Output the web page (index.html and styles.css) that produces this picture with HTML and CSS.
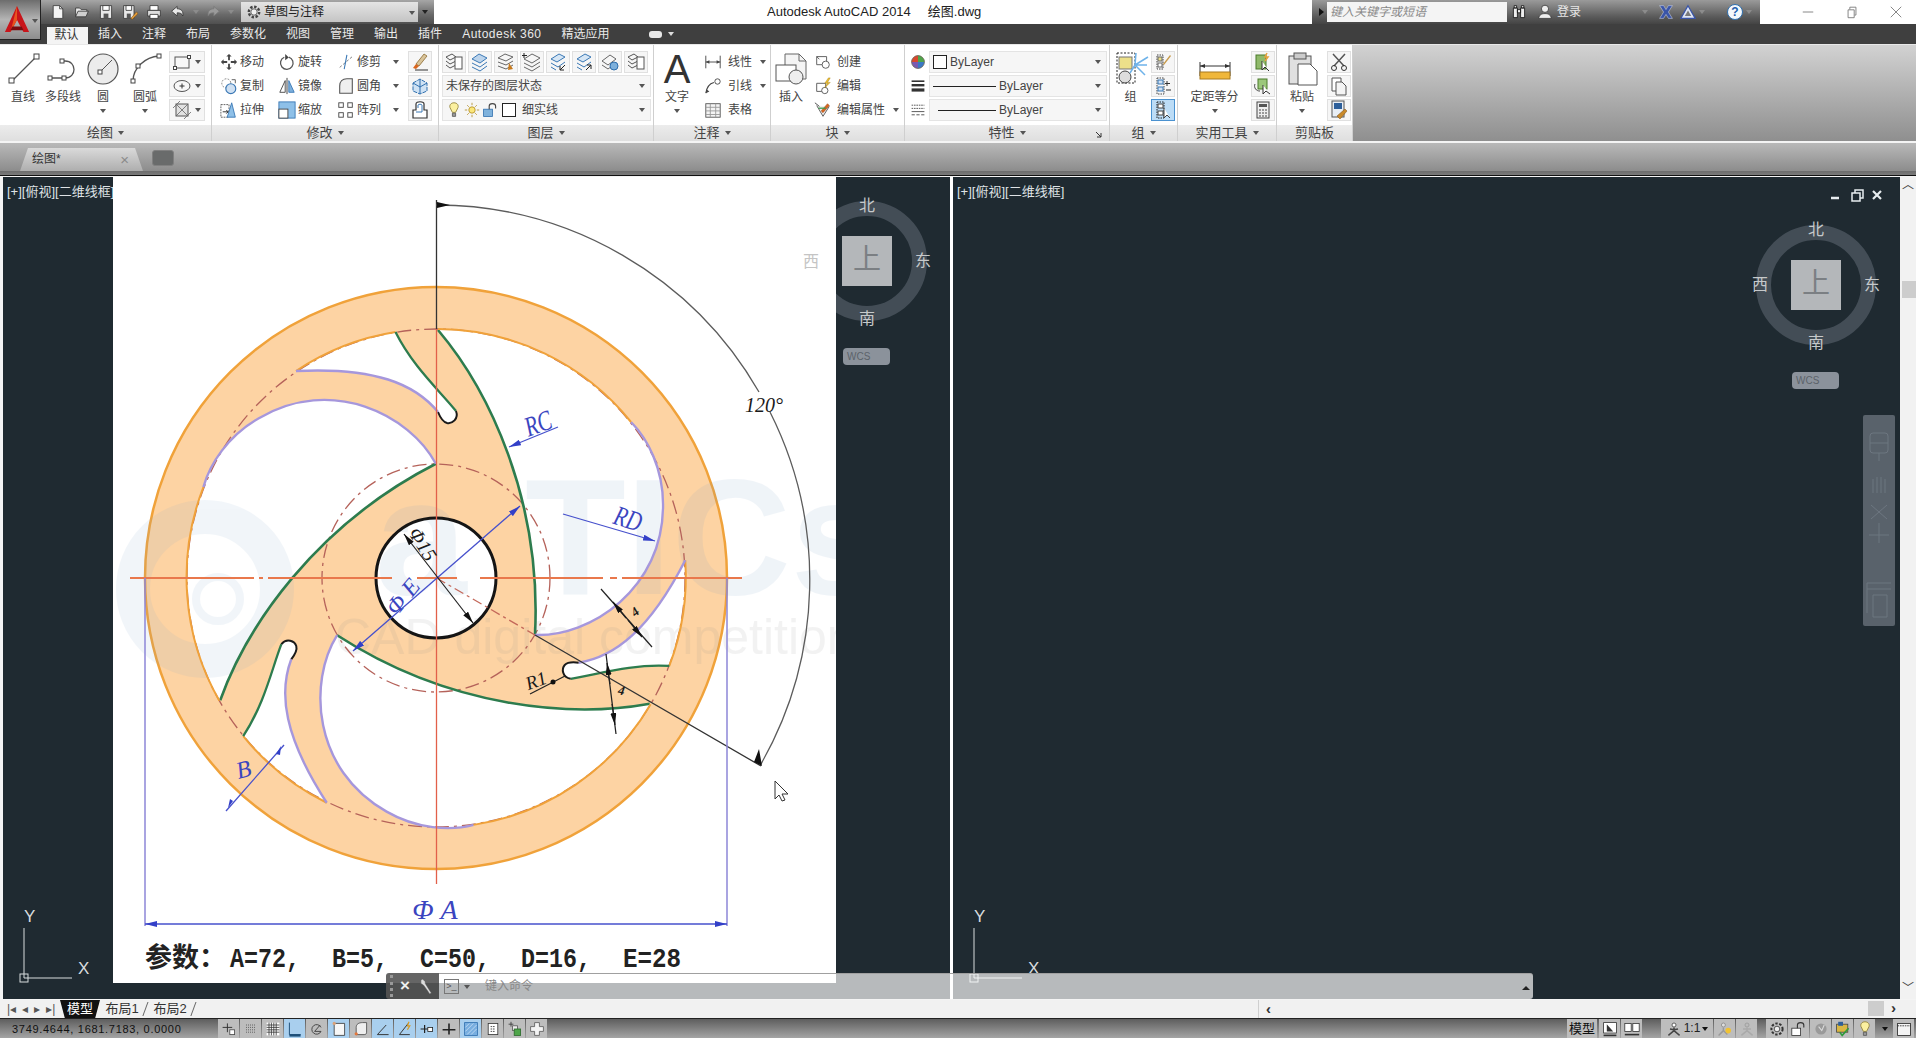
FILE: index.html
```html
<!DOCTYPE html>
<html lang="zh">
<head>
<meta charset="utf-8">
<title>Autodesk AutoCAD 2014</title>
<link rel="stylesheet" href="styles.css">
</head>
<body>
<svg class="defs" aria-hidden="true">
  <defs>
    <symbol id="q-new" viewBox="0 0 20 20"><path d="M4 2h8l4 4v12H4z" fill="#f4f4f4" stroke="#333"/><path d="M12 2v4h4" fill="none" stroke="#333"/></symbol>
    <symbol id="q-open" viewBox="0 0 20 20"><path d="M2 16V5h5l2 2h7v2" fill="#e8e8e8" stroke="#333"/><path d="M2 16l3-7h13l-3 7z" fill="#cfcfcf" stroke="#333"/></symbol>
    <symbol id="q-save" viewBox="0 0 20 20"><path d="M3 2h14v16H3z" fill="#e8e8e8" stroke="#333"/><path d="M6 2h8v6H6z" fill="#fff" stroke="#333"/><path d="M7 12h6v6H7z" fill="#555"/></symbol>
    <symbol id="q-saveas" viewBox="0 0 20 20"><path d="M2 2h13v16H2z" fill="#e8e8e8" stroke="#333"/><path d="M5 2h7v6H5z" fill="#fff" stroke="#333"/><path d="M6 12h5v6H6z" fill="#555"/><path d="M11 18l7-8 2 2-7 7z" fill="#e8a13c" stroke="#7a4a10" stroke-width=".7"/></symbol>
    <symbol id="q-print" viewBox="0 0 20 20"><path d="M5 2h10v6H5z" fill="#fff" stroke="#333"/><path d="M2 8h16v7H2z" fill="#ddd" stroke="#333"/><path d="M5 13h10v5H5z" fill="#fff" stroke="#333"/></symbol>
    <symbol id="q-undo" viewBox="0 0 20 20"><path d="M9 3L2 9l7 6v-4c4 0 6 1 7 4 1-6-2-9-7-9z" fill="#e8e8e8" stroke="#333"/></symbol>
    <symbol id="q-redo" viewBox="0 0 20 20"><path d="M11 3l7 6-7 6v-4c-4 0-6 1-7 4-1-6 2-9 7-9z" fill="#9a9a9a" stroke="#777"/></symbol>
    <symbol id="q-gear" viewBox="0 0 20 20"><circle cx="10" cy="10" r="6.5" fill="none" stroke="#444" stroke-width="3" stroke-dasharray="3 2"/><circle cx="10" cy="10" r="4" fill="#f0f0f0" stroke="#444"/></symbol>

    <symbol id="d-line" viewBox="0 0 36 36"><path d="M7 30L31 6" stroke="#555" stroke-width="1.2"/><rect x="4" y="27" width="5" height="5" fill="#fff" stroke="#444"/><rect x="29" y="3" width="5" height="5" fill="#fff" stroke="#444"/></symbol>
    <symbol id="d-pline" viewBox="0 0 36 36"><path d="M6 27h14M20 27c12 0 12-17 0-17h-3" fill="none" stroke="#555" stroke-width="1.3"/><g fill="#fff" stroke="#444"><rect x="3" y="25" width="4" height="4"/><rect x="17" y="25" width="4" height="4"/><rect x="15" y="8" width="4" height="4"/></g></symbol>
    <symbol id="d-circle" viewBox="0 0 36 36"><circle cx="18" cy="18" r="15" fill="#ececec" stroke="#555" stroke-width="1.2"/><path d="M15 21L27 9" stroke="#555"/><rect x="13" y="19" width="4" height="4" fill="#fff" stroke="#444"/></symbol>
    <symbol id="d-arc" viewBox="0 0 36 36"><path d="M6 30c0-13 12-24 26-25" fill="none" stroke="#555" stroke-width="1.3"/><g fill="#fff" stroke="#444"><rect x="4" y="28" width="4" height="4"/><rect x="9" y="13" width="4" height="4"/><rect x="30" y="3" width="4" height="4"/></g></symbol>
    <symbol id="d-rect" viewBox="0 0 20 20"><rect x="3" y="5" width="14" height="11" fill="#f7f7f7" stroke="#555"/><g fill="#fff" stroke="#444"><rect x="1.5" y="14.5" width="3" height="3"/><rect x="15.5" y="3.5" width="3" height="3"/></g></symbol>
    <symbol id="d-ell" viewBox="0 0 20 20"><ellipse cx="10" cy="10" rx="8" ry="5.5" fill="#f7f7f7" stroke="#555"/><path d="M10 7.5v5M7.5 10h5" stroke="#333"/></symbol>
    <symbol id="d-hatch" viewBox="0 0 20 20"><rect x="4" y="4" width="12" height="12" fill="#e2e2e2" stroke="#555"/><path d="M1 8L8 1M4 16L16 4M12 19l7-7M4 4l12 12" stroke="#666" stroke-width=".8"/></symbol>

    <symbol id="m-move" viewBox="0 0 20 20"><path d="M10 1l3 3h-2v4h-2V4H7zM10 19l3-3h-2v-4h-2v4H7zM1 10l3-3v2h4v2H4v2zM19 10l-3-3v2h-4v2h4v2z" fill="#444"/></symbol>
    <symbol id="m-rot" viewBox="0 0 20 20"><path d="M12 4.5A7 7 0 1 1 7 4.7" fill="none" stroke="#555" stroke-width="1.4"/><path d="M8 1v7l4-3z" fill="#444"/></symbol>
    <symbol id="m-trim" viewBox="0 0 20 20"><path d="M3 16L17 4" stroke="#777" stroke-dasharray="3 2"/><path d="M11 2l-3 16" stroke="#3a78b5" stroke-width="1.2"/></symbol>
    <symbol id="m-copy" viewBox="0 0 20 20"><circle cx="7" cy="7" r="5" fill="none" stroke="#777" stroke-dasharray="2 1.5"/><circle cx="12" cy="13" r="5.5" fill="#cfe0f2" stroke="#3a78b5" stroke-width="1.3"/><path d="M13 3h4v4" fill="none" stroke="#555"/></symbol>
    <symbol id="m-mirror" viewBox="0 0 20 20"><path d="M10 1v18" stroke="#333"/><path d="M8 4v13H2z" fill="#fff" stroke="#444"/><path d="M12 4v13h6z" fill="#7db0dc" stroke="#3a78b5"/></symbol>
    <symbol id="m-fillet" viewBox="0 0 20 20"><path d="M3 18V10c0-5 3-8 8-8h6v16z" fill="#f0f0f0" stroke="#555" stroke-width="1.2"/></symbol>
    <symbol id="m-stretch" viewBox="0 0 20 20"><path d="M1 4h9v14H1z" fill="none" stroke="#555" stroke-dasharray="2 1"/><path d="M13 2l4 16h-9z" fill="#8ec0e8" stroke="#3a78b5"/><path d="M3 12h6M7 10l2 2-2 2" stroke="#222" fill="none"/></symbol>
    <symbol id="m-scale" viewBox="0 0 20 20"><rect x="1" y="1" width="18" height="18" fill="#8ec0e8" stroke="#3a78b5"/><rect x="1" y="9" width="10" height="10" fill="#fff" stroke="#444"/></symbol>
    <symbol id="m-array" viewBox="0 0 20 20"><g fill="#fff" stroke="#444"><rect x="2" y="2" width="5" height="5"/><rect x="12" y="2" width="5" height="5"/><rect x="2" y="13" width="5" height="5"/><rect x="12" y="13" width="5" height="5"/></g></symbol>
    <symbol id="m-erase" viewBox="0 0 20 20"><path d="M5 18h13" stroke="#333"/><path d="M14 2l3 2-8 10-3-2z" fill="#d9c49a" stroke="#8a6a30" stroke-width=".8"/><path d="M6 12l3 2-3 3-3-1z" fill="#d9661e"/></symbol>
    <symbol id="m-expl" viewBox="0 0 20 20"><path d="M3 7l7-4 7 4v8l-7 3-7-3z" fill="#cfe2f4" stroke="#2f6fae" stroke-dasharray="4 1"/><path d="M10 3v15M3 7l7 4 7-4" stroke="#2f6fae" fill="none"/></symbol>
    <symbol id="m-off" viewBox="0 0 20 20"><path d="M3 18V10h3V4c0-3 8-3 8 0v6h3v8z" fill="#fff" stroke="#333" stroke-width="1.2"/><path d="M8 8V5c0-1 4-1 4 0v7H6" fill="none" stroke="#3a78b5"/></symbol>

    <symbol id="l-a" viewBox="0 0 20 20"><path d="M2 5l6-3 4 3-6 3zM2 9l4 3 6-3M2 13l4 3 6-3" fill="none" stroke="#555"/><rect x="11" y="5" width="7" height="12" fill="#fff" stroke="#555"/></symbol>
    <symbol id="l-b" viewBox="0 0 20 20"><path d="M2 7l7-5 8 4-7 5z" fill="#bcd4ec" stroke="#3a78b5"/><path d="M2 11l8 4 7-5M2 15l8 4 7-5" fill="none" stroke="#3a78b5"/></symbol>
    <symbol id="l-c" viewBox="0 0 20 20"><path d="M2 6l7-4 8 3-7 4zM2 10l8 3 7-4M2 14l8 3 7-4" fill="none" stroke="#666"/><path d="M13 11l4 6-5 1z" fill="#c77a1d"/></symbol>
    <symbol id="l-d" viewBox="0 0 20 20"><path d="M2 7l8-5 8 4-8 5zM2 11l8 4 8-5M2 15l8 4 8-5" fill="none" stroke="#666"/><path d="M2 1v5M0 3.500h5" stroke="#222"/></symbol>
    <symbol id="l-e" viewBox="0 0 20 20"><path d="M3 7l8-5 6 3-8 5z" fill="#d6e6f5" stroke="#3a78b5"/><path d="M3 11l7 4 7-5M3 15l5 3" fill="none" stroke="#3a78b5"/><path d="M17 13l-5 5M12 14v4h4" fill="none" stroke="#222"/></symbol>
    <symbol id="l-f" viewBox="0 0 20 20"><path d="M3 7l8-5 6 3-8 5z" fill="#d6e6f5" stroke="#3a78b5"/><path d="M3 11l7 4 7-5M3 15l5 3" fill="none" stroke="#3a78b5"/><path d="M12 18l5-5M13 13h4v4" fill="none" stroke="#222"/></symbol>
    <symbol id="l-g" viewBox="0 0 20 20"><path d="M2 9l8-6 6 4-8 6zM2 13l6 4 4-3" fill="none" stroke="#666"/><circle cx="14" cy="14" r="4" fill="#7db0dc" stroke="#2f6fae"/></symbol>
    <symbol id="l-bulb" viewBox="0 0 20 20"><path d="M10 1c4 0 6 3 5 6-1 2-2 4-3 6H8C7 11 6 9 5 7 4 4 6 1 10 1z" fill="#fbf0a0" stroke="#8a7a30"/><path d="M8 14h4v4H8z" fill="#999" stroke="#555"/></symbol>
    <symbol id="l-sun" viewBox="0 0 20 20"><circle cx="10" cy="10" r="4" fill="#fbe77a" stroke="#b08a20"/><path d="M10 1v3M10 16v3M1 10h3M16 10h3M4 4l2 2M14 14l2 2M4 16l2-2M14 6l2-2" stroke="#b08a20"/></symbol>
    <symbol id="l-lock" viewBox="0 0 20 20"><rect x="2" y="9" width="11" height="9" fill="#7fb2dc" stroke="#2f6fae"/><path d="M9 9V5c0-4 8-4 8 0v3" fill="none" stroke="#444" stroke-width="1.4"/></symbol>

    <symbol id="n-dim" viewBox="0 0 20 20"><path d="M2 3v14M18 3v14M2 10h16" stroke="#444"/><path d="M2 10l4-2v4zM18 10l-4-2v4z" fill="#444"/></symbol>
    <symbol id="n-lead" viewBox="0 0 20 20"><path d="M2 18C3 11 7 7 11 6" fill="none" stroke="#444" stroke-width="1.2"/><circle cx="15" cy="5" r="3" fill="none" stroke="#444"/><path d="M2 18l1-4 3 2z" fill="#444"/></symbol>
    <symbol id="n-table" viewBox="0 0 20 20"><rect x="2" y="3" width="16" height="15" fill="#f4f4f4" stroke="#555"/><path d="M2 7h16M2 11h16M2 15h16M7 3v15M13 3v15" stroke="#999"/></symbol>
    <symbol id="b-ins" viewBox="0 0 36 36"><path d="M12 3h14l7 7v18H12z" fill="#f4f4f4" stroke="#666"/><path d="M26 3v7h7" fill="none" stroke="#666"/><rect x="3" y="14" width="20" height="16" fill="#fff" stroke="#555"/><circle cx="23" cy="26" r="7" fill="#eee" stroke="#555"/></symbol>
    <symbol id="b-make" viewBox="0 0 20 20"><path d="M3 4h11v9H3z" fill="#fff" stroke="#555"/><circle cx="13" cy="13" r="4" fill="#fff" stroke="#555"/><path d="M3 4l3 3" stroke="#555"/></symbol>
    <symbol id="b-edit" viewBox="0 0 20 20"><path d="M3 7h10v9H3z" fill="#fff" stroke="#555"/><circle cx="12" cy="15" r="3.500" fill="#fff" stroke="#555"/><path d="M16 1l-4 6h3l-3 5 6-6h-3l3-5z" fill="#f1c232" stroke="#a07a10" stroke-width=".5"/></symbol>
    <symbol id="b-attr" viewBox="0 0 20 20"><path d="M3 5l7 12 7-11" fill="#eee" stroke="#555"/><path d="M1 2l5 4" stroke="#444"/><path d="M8 11l7-8 2 2-7 8z" fill="#d9661e" stroke="#8a3a10" stroke-width=".5"/><path d="M5 8h8" stroke="#3a9a4a" stroke-width="1.4"/></symbol>
    <symbol id="p-wheel" viewBox="0 0 20 20"><circle cx="10" cy="10" r="8" fill="#e9c23a"/><path d="M10 10L2 10A8 8 0 0 1 10 2z" fill="#d9482e"/><path d="M10 10L18 10A8 8 0 0 1 10 18z" fill="#3a78c5"/><path d="M10 10L10 18A8 8 0 0 1 2 10z" fill="#7a5ab0"/><path d="M10 10L10 2A8 8 0 0 1 18 10z" fill="#4fa54a"/><circle cx="10" cy="10" r="8" fill="none" stroke="#666"/></symbol>
    <symbol id="p-weight" viewBox="0 0 20 20"><path d="M2 4h16" stroke="#333" stroke-width="2"/><path d="M2 9h16" stroke="#333" stroke-width="3"/><path d="M2 15h16" stroke="#333" stroke-width="4"/></symbol>
    <symbol id="p-type" viewBox="0 0 20 20"><path d="M2 4h16M2 8h16" stroke="#333" stroke-dasharray="2 1"/><path d="M2 12h16" stroke="#333"/><path d="M2 16h16" stroke="#333" stroke-dasharray="4 2"/></symbol>
    <symbol id="g-group" viewBox="0 0 36 36"><rect x="4" y="2" width="18" height="30" fill="none" stroke="#222" stroke-dasharray="2 1.500"/><rect x="6" y="6" width="13" height="12" fill="#ece08a" stroke="#777"/><circle cx="12" cy="26" r="6" fill="#ddd" stroke="#444"/><path d="M22 14l13-8M22 14l12 0M22 14l10 10M22 14l1-12M22 14l-5 8" stroke="#6fb3ea" stroke-width="1.500"/></symbol>
    <symbol id="g-a" viewBox="0 0 20 20"><path d="M4 3h6v14H4z" fill="none" stroke="#444" stroke-dasharray="1.500 1"/><rect x="5" y="5" width="4" height="4" fill="#ece08a" stroke="#666"/><rect x="5" y="11" width="4" height="4" fill="#fff" stroke="#666"/><path d="M10 12l7-9 1 1-7 9z" fill="#c79a4a"/></symbol>
    <symbol id="g-b" viewBox="0 0 20 20"><path d="M4 2h7v16H4z" fill="none" stroke="#444" stroke-dasharray="1.500 1"/><rect x="5" y="4" width="5" height="4" fill="#cfe0f2" stroke="#3a78b5"/><rect x="5" y="11" width="5" height="4" fill="#cfe0f2" stroke="#3a78b5"/><path d="M14 5v5M12 7.500h5M13 14h5" stroke="#333"/></symbol>
    <symbol id="g-c" viewBox="0 0 20 20"><path d="M4 2h7v16H4z" fill="none" stroke="#222" stroke-dasharray="1.500 1"/><rect x="5" y="4" width="5" height="4" fill="#fff" stroke="#444"/><rect x="5" y="11" width="5" height="4" fill="#fff" stroke="#444"/><path d="M11 8v10l3-3 3 3" fill="#fff" stroke="#444"/></symbol>
    <symbol id="u-meas" viewBox="0 0 36 36"><path d="M3 11v14M33 11v14M3 15h30" stroke="#333"/><path d="M3 15l5-2v4zM33 15l-5-2v4z" fill="#333"/><rect x="3" y="21" width="30" height="7" fill="#f0b73a" stroke="#a87a20"/></symbol>
    <symbol id="u-qs" viewBox="0 0 20 20"><rect x="3" y="3" width="10" height="14" fill="#8fb96a" stroke="#4a7a2a"/><path d="M9 9v9l3-3 4 4" fill="#fff" stroke="#333"/><path d="M14 1l-2 4h3l-3 4" stroke="#e8a13c" fill="none" stroke-width="1.500"/></symbol>
    <symbol id="u-id" viewBox="0 0 20 20"><rect x="5" y="3" width="9" height="10" fill="#9bc77a" stroke="#4a7a2a"/><path d="M2 8a5 5 0 0 0 5 7" fill="none" stroke="#444"/><path d="M10 9v9l3-3 4 3" fill="#fff" stroke="#333"/></symbol>
    <symbol id="u-calc" viewBox="0 0 20 20"><rect x="4" y="2" width="12" height="16" fill="#eee" stroke="#444"/><rect x="6" y="4" width="8" height="3" fill="#555"/><path d="M6 10h2M9 10h2M12 10h2M6 13h2M9 13h2M12 13h2M6 16h2M9 16h2M12 16h2" stroke="#444"/></symbol>
    <symbol id="c-paste" viewBox="0 0 36 36"><rect x="5" y="5" width="22" height="28" fill="#e0e0e0" stroke="#555"/><rect x="10" y="2" width="12" height="6" fill="#ccc" stroke="#555"/><path d="M14 13h12l7 7v14H14z" fill="#fff" stroke="#555"/></symbol>
    <symbol id="c-cut" viewBox="0 0 20 20"><path d="M4 2l11 12M16 2L5 14" stroke="#555" stroke-width="1.500"/><circle cx="5" cy="16" r="2.500" fill="none" stroke="#333"/><circle cx="15" cy="16" r="2.500" fill="none" stroke="#333"/></symbol>
    <symbol id="c-copy" viewBox="0 0 20 20"><path d="M3 2h9v13H3z" fill="#fff" stroke="#555"/><path d="M7 6h6l4 4v9H7z" fill="#f4f4f4" stroke="#555"/></symbol>
    <symbol id="c-match" viewBox="0 0 20 20"><rect x="3" y="1" width="12" height="16" fill="#e8eef5" stroke="#555"/><rect x="5" y="3" width="8" height="6" fill="#2d5f9a"/><path d="M8 16l8-7 2 2-7 8z" fill="#c98a2a" stroke="#7a4a10" stroke-width=".5"/></symbol>

    <symbol id="s-a" viewBox="0 0 20 20"><path d="M2 8h12M8 3v11" stroke="#333" stroke-width="1.200"/><rect x="11" y="11" width="6" height="6" fill="#fff" stroke="#444"/></symbol>
    <symbol id="s-b" viewBox="0 0 20 20"><path d="M4 5h12M4 8h12M4 11h12M4 14h12" stroke="#333" stroke-dasharray="1 1.500"/></symbol>
    <symbol id="s-c" viewBox="0 0 20 20"><rect x="2" y="2" width="16" height="16" fill="#fff"/><path d="M2 5h16M2 8h16M2 11h16M2 14h16M5 2v16M8 2v16M11 2v16M14 2v16" stroke="#333"/></symbol>
    <symbol id="s-d" viewBox="0 0 20 20"><path d="M3 2v15h14" fill="none" stroke="#1d4f78" stroke-width="1.200"/><path d="M3 18h14" stroke="#1d4f78" stroke-width="3"/></symbol>
    <symbol id="s-e" viewBox="0 0 20 20"><path d="M15 8a6 6 0 1 0 0 5H7l7-8" fill="none" stroke="#444" stroke-width="1.200"/></symbol>
    <symbol id="s-f" viewBox="0 0 20 20"><path d="M4 3h13v15H4z" fill="#f7f7f7" stroke="#333"/><circle cx="4" cy="3" r="2" fill="#d9a27a"/></symbol>
    <symbol id="s-g" viewBox="0 0 20 20"><path d="M4 8c0-4 3-6 8-6h5v12c0 2-1 3-3 3H4z" fill="#eee" stroke="#444"/><circle cx="4" cy="16" r="2" fill="#e4763a"/></symbol>
    <symbol id="s-h" viewBox="0 0 20 20"><path d="M3 17h14M3 17L14 5" stroke="#333" stroke-width="1.200" fill="none"/></symbol>
    <symbol id="s-i" viewBox="0 0 20 20"><path d="M3 17h13M3 17L14 3" stroke="#333" stroke-width="1.200" fill="none"/><path d="M15 1l-2 5h3l-3 5" stroke="#d99a1e" stroke-width="1.500" fill="none"/></symbol>
    <symbol id="s-j" viewBox="0 0 20 20"><path d="M2 10h10M7 5v10" stroke="#222" stroke-width="1.500"/><rect x="11" y="8" width="6" height="5" fill="#fff" stroke="#222"/></symbol>
    <symbol id="s-k" viewBox="0 0 20 20"><path d="M2 11h16M10 3v14" stroke="#222" stroke-width="2"/></symbol>
    <symbol id="s-l" viewBox="0 0 20 20"><rect x="2" y="2" width="16" height="16" fill="#78aee0" stroke="#2f6fae"/><path d="M3 8l5-5M3 13l10-10M5 17L17 5M10 17l7-7" stroke="#c9e0f5"/></symbol>
    <symbol id="s-m" viewBox="0 0 20 20"><rect x="4" y="3" width="12" height="14" fill="#fff" stroke="#333"/><path d="M7 7h6M7 10h6M7 13h6" stroke="#222" stroke-dasharray="2 1"/></symbol>
    <symbol id="s-n" viewBox="0 0 20 20"><path d="M2 4h6M5 1v6" stroke="#333"/><rect x="7" y="6" width="6" height="6" fill="#eee" stroke="#555"/><rect x="9" y="10" width="8" height="8" fill="#4fa54a" stroke="#2a6a2a"/></symbol>
    <symbol id="s-o" viewBox="0 0 20 20"><path d="M7 2h6v5h5v6h-5v5H7v-5H2V7h5z" fill="#f4f4f4" stroke="#555"/></symbol>
    <symbol id="s-anno" viewBox="0 0 20 20"><circle cx="10" cy="5" r="2.500" fill="#fff" stroke="#444"/><path d="M10 8v4L3 18M10 12l7 6M5 10l5 1 5-1" fill="none" stroke="#444" stroke-width="1.800"/></symbol>
    <symbol id="s-annob" viewBox="0 0 20 20"><circle cx="8" cy="5" r="2.500" fill="#ddd" stroke="#888"/><path d="M8 8v4L2 18M8 12l5 5" fill="none" stroke="#999" stroke-width="1.800"/><circle cx="14" cy="12" r="3.500" fill="#f1c232"/></symbol>
    <symbol id="s-annoc" viewBox="0 0 20 20"><circle cx="10" cy="5" r="2.500" fill="#bbb" stroke="#999"/><path d="M10 8v4L3 18M10 12l7 6M5 10l10 0" fill="none" stroke="#aaa" stroke-width="1.800"/></symbol>
    <symbol id="s-gear" viewBox="0 0 20 20"><circle cx="10" cy="10" r="7" fill="none" stroke="#333" stroke-width="2.500" stroke-dasharray="3 2"/><circle cx="10" cy="10" r="3.500" fill="#eee" stroke="#333"/></symbol>
    <symbol id="s-lock" viewBox="0 0 20 20"><rect x="1" y="9" width="11" height="9" fill="#fff" stroke="#333"/><path d="M8 9V5c0-4 8-4 8 0v3" fill="none" stroke="#333" stroke-width="1.400"/></symbol>
    <symbol id="s-hw" viewBox="0 0 20 20"><circle cx="10" cy="10" r="7" fill="#9a9a9a"/><path d="M7 7l4 5 3-7" stroke="#ddd" stroke-width="1.300" fill="none"/></symbol>
    <symbol id="s-tool" viewBox="0 0 20 20"><rect x="2" y="4" width="14" height="10" fill="#d9b642" stroke="#444"/><rect x="4" y="1" width="6" height="5" fill="#2d5f9a"/><path d="M6 14l3 4 8-9" fill="none" stroke="#2f9a3a" stroke-width="2"/></symbol>
    <symbol id="s-win" viewBox="0 0 20 20"><rect x="2" y="3" width="16" height="15" fill="#f4f4f4" stroke="#222"/><path d="M2 6h16" stroke="#222" stroke-dasharray="2 1"/></symbol>

    <marker id="a-blue" viewBox="0 0 12 6" refX="12" refY="3" markerWidth="12" markerHeight="6" markerUnits="userSpaceOnUse" orient="auto-start-reverse"><path d="M0 0l12 3-12 3z" fill="#3340c8"/></marker>
    <marker id="a-black" viewBox="0 0 12 6" refX="12" refY="3" markerWidth="12" markerHeight="6" markerUnits="userSpaceOnUse" orient="auto-start-reverse"><path d="M0 0l12 3-12 3z" fill="#111"/></marker>

    <g id="cell">
      <path class="w1-s" d="M438 331C488 390 542 500 535 636"/>
      <path class="w1-p" d="M535 636C590 638 664 590 663 505C663 470 648 440 631 423"/>
      <path class="w-a" d="M631 423A249 249 0 0 0 438 330"/>
      <path class="w-a" d="M296 372A249 249 0 0 1 395.500 333"/>
      <path class="s-g" d="M395.500 333C413 368 440 392 456 412"/>
      <path class="s-k" d="M456 412C459 420 452 425 447 424C443 423 440 418 438 413"/>
      <path class="w1-p" d="M438 413C415 385 375 368 296 372"/>
    </g>
    <path id="win1" d="M438 331C488 390 542 500 535 636C590 638 664 590 663 505C663 470 648 440 631 423A249 249 0 0 0 438 330Z"/>
    <path id="slot1" d="M395.500 333C413 368 440 392 456 412C459 420 452 425 447 424C443 423 440 418 438 413C415 385 375 368 296 372A249 249 0 0 1 395.500 333Z"/>
  </defs>
</svg>

<header class="titlebar">
  <div class="appbtn">
    <svg class="applogo" viewBox="0 0 28 30"><path d="M14 1L1 29h6l7-13 7 13h6z" fill="#c8141a"/><path d="M14 1L7 29l7-13z" fill="#e8531f"/><path d="M9 23h10l2 4H7z" fill="#7a0c10"/></svg>
    <i class="dd dd-dark"></i>
  </div>
  <div class="qat">
    <svg class="qi"><use href="#q-new"/></svg>
    <svg class="qi"><use href="#q-open"/></svg>
    <svg class="qi"><use href="#q-save"/></svg>
    <svg class="qi"><use href="#q-saveas"/></svg>
    <svg class="qi"><use href="#q-print"/></svg>
    <svg class="qi"><use href="#q-undo"/></svg>
    <i class="dd dd-grey"></i>
    <svg class="qi"><use href="#q-redo"/></svg>
    <i class="dd dd-grey"></i>
    <div class="workspace">
      <svg class="qi ws-gear"><use href="#q-gear"/></svg>
      <span>草图与注释</span>
      <i class="dd dd-dark ws-dd"></i>
    </div>
    <i class="dd dd-dark qat-more"></i>
  </div>
  <div class="wintitle"><span>Autodesk AutoCAD 2014</span><span class="docname">绘图.dwg</span></div>
  <div class="searchbar">
    <i class="tri-r"></i>
    <div class="searchbox">键入关键字或短语</div>
    <svg class="qi bino" viewBox="0 0 20 20"><path d="M3 5h5v12H3zM12 5h5v12h-5zM4 2h3v3H4zM13 2h3v3h-3zM8 7h4v4H8z" fill="#eee" stroke="#111"/></svg>
    <svg class="qi user" viewBox="0 0 20 20"><circle cx="10" cy="6" r="4.500" fill="#eee" stroke="#333"/><path d="M2 18c1-5 4-6 8-6s7 1 8 6z" fill="#eee" stroke="#333"/></svg>
    <span class="login">登录</span>
    <i class="dd dd-grey login-dd"></i>
    <svg class="qi xicon" viewBox="0 0 20 20"><path d="M2 2h5l3 5 3-5h5l-5 8 5 8h-5l-3-5-3 5H2l5-8z" fill="#3a55a8" stroke="#dfe6f5" stroke-width=".6"/></svg>
    <svg class="qi a360" viewBox="0 0 20 20"><path d="M10 2L1 18h18z" fill="#dfe6f5" stroke="#3a55a8" stroke-width="1.500"/><path d="M10 8l-4 7h8z" fill="#7a7a7a"/></svg>
    <i class="dd dd-grey"></i>
    <span class="help">?</span>
    <i class="dd dd-grey"></i>
  </div>
  <div class="winctl">
    <svg class="wc" viewBox="0 0 16 16"><path d="M2 8h12" stroke="#777"/></svg>
    <svg class="wc" viewBox="0 0 16 16"><path d="M3.500 5.500h7v9h-7zM5.500 5V2.500h7v9H11" fill="none" stroke="#777"/></svg>
    <svg class="wc" viewBox="0 0 16 16"><path d="M2 2l12 12M14 2L2 14" stroke="#777"/></svg>
  </div>
</header>

<nav class="ribbontabs">
  <span class="rt active">默认</span>
  <span class="rt">插入</span>
  <span class="rt">注释</span>
  <span class="rt">布局</span>
  <span class="rt">参数化</span>
  <span class="rt">视图</span>
  <span class="rt">管理</span>
  <span class="rt">输出</span>
  <span class="rt">插件</span>
  <span class="rt rt-wide">Autodesk 360</span>
  <span class="rt">精选应用</span>
  <span class="rt-extra"><i class="rt-pill"></i><i class="dd dd-white"></i></span>
</nav>

<section class="ribbon">
  <div class="panel w-draw">
    <div class="pbody pad4">
      <div class="lg w38"><svg class="ilg"><use href="#d-line"/></svg><span>直线</span></div>
      <div class="lg w42"><svg class="ilg"><use href="#d-pline"/></svg><span>多段线</span></div>
      <div class="lg w38"><svg class="ilg"><use href="#d-circle"/></svg><span>圆</span><i class="dd dd-dark"></i></div>
      <div class="lg w46"><svg class="ilg"><use href="#d-arc"/></svg><span>圆弧</span><i class="dd dd-dark"></i></div>
      <div class="col ml1">
        <div class="ib ib-dd"><svg class="ic"><use href="#d-rect"/></svg><i class="dd dd-dark"></i></div>
        <div class="ib ib-dd"><svg class="ic"><use href="#d-ell"/></svg><i class="dd dd-dark"></i></div>
        <div class="ib ib-dd"><svg class="ic"><use href="#d-hatch"/></svg><i class="dd dd-dark"></i></div>
      </div>
    </div>
    <div class="ptitle">绘图<i class="dd dd-dark"></i></div>
  </div>

  <div class="panel w-mod">
    <div class="pbody pad8">
      <div class="col w58">
        <div class="st"><svg class="ic"><use href="#m-move"/></svg><span>移动</span></div>
        <div class="st"><svg class="ic"><use href="#m-copy"/></svg><span>复制</span></div>
        <div class="st"><svg class="ic"><use href="#m-stretch"/></svg><span>拉伸</span></div>
      </div>
      <div class="col w59">
        <div class="st"><svg class="ic"><use href="#m-rot"/></svg><span>旋转</span></div>
        <div class="st"><svg class="ic"><use href="#m-mirror"/></svg><span>镜像</span></div>
        <div class="st"><svg class="ic"><use href="#m-scale"/></svg><span>缩放</span></div>
      </div>
      <div class="col w71">
        <div class="st"><svg class="ic"><use href="#m-trim"/></svg><span>修剪</span><i class="dd dd-dark gap12"></i></div>
        <div class="st"><svg class="ic"><use href="#m-fillet"/></svg><span>圆角</span><i class="dd dd-dark gap12"></i></div>
        <div class="st"><svg class="ic"><use href="#m-array"/></svg><span>阵列</span><i class="dd dd-dark gap12"></i></div>
      </div>
      <div class="col">
        <div class="ib"><svg class="ic"><use href="#m-erase"/></svg></div>
        <div class="ib"><svg class="ic"><use href="#m-expl"/></svg></div>
        <div class="ib"><svg class="ic"><use href="#m-off"/></svg></div>
      </div>
    </div>
    <div class="ptitle">修改<i class="dd dd-dark"></i></div>
  </div>

  <div class="panel w-layer">
    <div class="pbody pad3">
      <div class="col">
        <div class="iconrow">
          <div class="ib"><svg class="ic"><use href="#l-a"/></svg></div>
          <div class="ib"><svg class="ic"><use href="#l-b"/></svg></div>
          <div class="ib"><svg class="ic"><use href="#l-c"/></svg></div>
          <div class="ib"><svg class="ic"><use href="#l-d"/></svg></div>
          <div class="ib"><svg class="ic"><use href="#l-e"/></svg></div>
          <div class="ib"><svg class="ic"><use href="#l-f"/></svg></div>
          <div class="ib"><svg class="ic"><use href="#l-g"/></svg></div>
          <div class="ib"><svg class="ic"><use href="#l-a"/></svg></div>
        </div>
        <div class="combo w209"><span>未保存的图层状态</span><i class="dd dd-dark push"></i></div>
        <div class="combo w209 layerc">
          <svg class="ic16"><use href="#l-bulb"/></svg><svg class="ic16"><use href="#l-sun"/></svg><svg class="ic16"><use href="#l-lock"/></svg>
          <b class="swatch"></b><span>细实线</span><i class="dd dd-dark push"></i>
        </div>
      </div>
    </div>
    <div class="ptitle">图层<i class="dd dd-dark"></i></div>
  </div>

  <div class="panel w-note">
    <div class="pbody">
      <div class="lg w46"><span class="bigA">A</span><span>文字</span><i class="dd dd-dark"></i></div>
      <div class="col wide-ic ml4">
        <div class="st"><svg class="ic"><use href="#n-dim"/></svg><span>线性</span><i class="dd dd-dark gap8"></i></div>
        <div class="st"><svg class="ic"><use href="#n-lead"/></svg><span>引线</span><i class="dd dd-dark gap8"></i></div>
        <div class="st"><svg class="ic"><use href="#n-table"/></svg><span>表格</span></div>
      </div>
    </div>
    <div class="ptitle">注释<i class="dd dd-dark"></i></div>
  </div>

  <div class="panel w-block">
    <div class="pbody">
      <div class="lg w40"><svg class="ilg"><use href="#b-ins"/></svg><span>插入</span></div>
      <div class="col block-ic ml3">
        <div class="st"><svg class="ic"><use href="#b-make"/></svg><span>创建</span></div>
        <div class="st"><svg class="ic"><use href="#b-edit"/></svg><span>编辑</span></div>
        <div class="st"><svg class="ic"><use href="#b-attr"/></svg><span>编辑属性</span><i class="dd dd-dark gap8"></i></div>
      </div>
    </div>
    <div class="ptitle">块<i class="dd dd-dark"></i></div>
  </div>

  <div class="panel w-prop">
    <div class="pbody pad4">
      <div class="col">
        <div class="prow"><svg class="ic"><use href="#p-wheel"/></svg><div class="combo w178"><b class="swatch"></b><span>ByLayer</span><i class="dd dd-dark push"></i></div></div>
        <div class="prow"><svg class="ic"><use href="#p-weight"/></svg><div class="combo w178"><b class="lw lw63"></b><span>ByLayer</span><i class="dd dd-dark push"></i></div></div>
        <div class="prow"><svg class="ic"><use href="#p-type"/></svg><div class="combo w178"><b class="lw lw58"></b><span>ByLayer</span><i class="dd dd-dark push"></i></div></div>
      </div>
    </div>
    <div class="ptitle">特性<i class="dd dd-dark"></i><svg class="launch" viewBox="0 0 8 8"><path d="M1 1l5 5M6 2v4H2" fill="none" stroke="#333"/></svg></div>
  </div>

  <div class="panel w-group">
    <div class="pbody">
      <div class="lg w41"><svg class="ilg"><use href="#g-group"/></svg><span>组</span></div>
      <div class="col">
        <div class="ib"><svg class="ic"><use href="#g-a"/></svg></div>
        <div class="ib"><svg class="ic"><use href="#g-b"/></svg></div>
        <div class="ib on"><svg class="ic"><use href="#g-c"/></svg></div>
      </div>
    </div>
    <div class="ptitle">组<i class="dd dd-dark"></i></div>
  </div>

  <div class="panel w-util">
    <div class="pbody">
      <div class="lg w73"><svg class="ilg"><use href="#u-meas"/></svg><span>定距等分</span><i class="dd dd-dark"></i></div>
      <div class="col">
        <div class="ib"><svg class="ic"><use href="#u-qs"/></svg></div>
        <div class="ib"><svg class="ic"><use href="#u-id"/></svg></div>
        <div class="ib"><svg class="ic"><use href="#u-calc"/></svg></div>
      </div>
    </div>
    <div class="ptitle">实用工具<i class="dd dd-dark"></i></div>
  </div>

  <div class="panel w-clip">
    <div class="pbody">
      <div class="lg w50"><svg class="ilg"><use href="#c-paste"/></svg><span>粘贴</span><i class="dd dd-dark"></i></div>
      <div class="col">
        <div class="ib"><svg class="ic"><use href="#c-cut"/></svg></div>
        <div class="ib"><svg class="ic"><use href="#c-copy"/></svg></div>
        <div class="ib"><svg class="ic"><use href="#c-match"/></svg></div>
      </div>
    </div>
    <div class="ptitle">剪贴板</div>
  </div>
</section>

<div class="doctabs">
  <div class="doctab"><span>绘图*</span><span class="doc-x">×</span></div>
  <div class="newtab"></div>
</div>

<main class="main">
  <div class="vp">
    <div class="vplabel">[+][俯视][二维线框]</div>
    <div class="cube cube-l">
      <div class="ring"></div>
      <div class="face">上</div>
      <span class="dir n">北</span><span class="dir s">南</span><span class="dir e">东</span>
      <div class="wcs">WCS</div>
    </div>
    <svg class="ucs" viewBox="0 0 80 70"><path d="M22 10V60M22 60H70" stroke="#d8dcde" fill="none"/><rect x="18" y="56" width="8" height="8" fill="none" stroke="#d8dcde"/><text class="ucs-t" x="76" y="56">X</text><text class="ucs-t" x="22" y="4">Y</text></svg>

    <div class="sheet">
      <svg class="draw" viewBox="113 178 723 805">
        <circle cx="436" cy="579" r="291" fill="#fdd3a3" stroke="#f0a23a" stroke-width="2.500"/>
        <g fill="#fff">
          <use href="#win1"/><use href="#win1" transform="rotate(120 436 579)"/><use href="#win1" transform="rotate(240 436 579)"/>
          <use href="#slot1"/><use href="#slot1" transform="rotate(120 436 579)"/><use href="#slot1" transform="rotate(240 436 579)"/>
        </g>
        <circle cx="436" cy="579" r="60" fill="#fff"/>
        <g class="wm">
          <circle cx="205" cy="590" r="72" fill="none" stroke="#7fa6cc" stroke-width="34"/>
          <circle cx="218" cy="600" r="22" fill="none" stroke="#7fa6cc" stroke-width="8"/>
          <text class="wm-a" x="375" y="595">a</text>
          <text class="wm-t" x="525" y="595">TICs</text>
          <text class="wm-s" x="335" y="655">CAD digital competition</text>
        </g>
        <circle cx="436" cy="579" r="249" class="dash"/>
        <circle cx="436" cy="579" r="114" class="dash"/>
        <use href="#cell"/><use href="#cell" transform="rotate(120 436 579)"/><use href="#cell" transform="rotate(240 436 579)"/>
        <circle cx="436" cy="579" r="60" fill="none" stroke="#151515" stroke-width="3"/>

        <path class="cl-v" d="M436.500 330V885"/>
        <path class="cl-h" d="M130 579H254M259 579H263M268 579H392M417 579H457M480 579H603M610 579H617M622 579H742"/>
        <path class="cl-d" d="M436.500 579L535 636"/>

        <path class="thin-k" d="M436.500 201V330M535 636L761 767"/>
        <path class="arc" d="M436.500 206A373 373 0 0 1 759 393M770 413A373 373 0 0 1 761 765"/>
        <path class="mk" d="M437 203l13 3-13 3zM759 750l3 17-8-4z"/>
        <text class="t-k t120" x="745" y="413">120°</text>

        <path class="dim-b" d="M558 428L509 448" marker-end="url(#a-blue)"/>
        <text class="t-b tn" x="524" y="434" textLength="27" lengthAdjust="spacingAndGlyphs" transform="rotate(-20 537 423)">RC</text>
        <path class="dim-b" d="M563 515L655 542" marker-end="url(#a-blue)"/>
        <text class="t-b tn" x="614" y="529" textLength="28" lengthAdjust="spacingAndGlyphs" transform="rotate(18 628 520)">RD</text>
        <path class="dim-b" d="M353 652L520 507" marker-start="url(#a-blue)" marker-end="url(#a-blue)"/>
        <text class="t-b t-m" x="402" y="606" transform="rotate(-50 402 597)">Φ E</text>
        <path class="dim-b" d="M226 812L284 746"/>
        <path class="mk-b" d="M233 802l-5 7 2-9zM276 755l5-8-1 9z"/>
        <text class="t-b" x="236" y="778" transform="rotate(-15 245 770)">B</text>
        <path class="dim-a" d="M145 579V927M727 579V927"/>
        <path class="dim-b" d="M145 925H727" marker-start="url(#a-blue)" marker-end="url(#a-blue)"/>
        <text class="t-b t-m ta" x="435" y="920">Φ A</text>

        <path class="dim-k" d="M404 535L473 624" marker-start="url(#a-black)" marker-end="url(#a-black)"/>
        <text class="t-k t-m tph" x="423" y="552" transform="rotate(58 423 545)">Φ15</text>
        <path class="dim-k" d="M601 590L652 648"/>
        <path class="dim-k" d="M626 619L613 603" marker-end="url(#a-black)"/>
        <path class="dim-k" d="M628 621L642 638" marker-end="url(#a-black)"/>
        <text class="t-k t4" x="630" y="620" transform="rotate(-40 630 612)">4</text>
        <path class="dim-k" d="M606 655L616 735"/>
        <path class="dim-k" d="M610 685L607 664" marker-end="url(#a-black)"/>
        <path class="dim-k" d="M612 705L615 726" marker-end="url(#a-black)"/>
        <text class="t-k t4" x="618" y="696" transform="rotate(10 622 693)">4</text>
        <path class="dim-k" d="M530 695L565 677"/>
        <circle cx="553" cy="683" r="2.500" fill="#111"/>
        <text class="t-k tr1" x="526" y="686" transform="rotate(-20 542 682)">R1</text>

        <text class="par cjk" x="145" y="968">参数：</text>
        <text class="par" x="230" y="968" textLength="70" lengthAdjust="spacingAndGlyphs">A=72,</text>
        <text class="par" x="332" y="968" textLength="56" lengthAdjust="spacingAndGlyphs">B=5,</text>
        <text class="par" x="420" y="968" textLength="70" lengthAdjust="spacingAndGlyphs">C=50,</text>
        <text class="par" x="521" y="968" textLength="70" lengthAdjust="spacingAndGlyphs">D=16,</text>
        <text class="par" x="623" y="968" textLength="58" lengthAdjust="spacingAndGlyphs">E=28</text>

        <text class="ghost" x="803" y="268">西</text>
        <path d="M775 782V800L779 796L782 802L785 801L782 795L788 795Z" fill="#fff" stroke="#333"/>
      </svg>
    </div>
  </div>

  <div class="vp-gap"></div>

  <div class="vp">
    <div class="vplabel">[+][俯视][二维线框]</div>
    <div class="vpctl">
      <svg viewBox="0 0 60 14"><path d="M3 10h8" stroke="#e8edf0" stroke-width="2.500"/><path d="M24 5h8v8h-8zM27 5V2h8v8h-3" fill="none" stroke="#e8edf0" stroke-width="1.500"/><path d="M45 3l8 8M53 3l-8 8" stroke="#e8edf0" stroke-width="2.200"/></svg>
    </div>
    <div class="cube cube-r">
      <div class="ring"></div>
      <div class="face">上</div>
      <span class="dir n">北</span><span class="dir s">南</span><span class="dir e">东</span><span class="dir w">西</span>
      <div class="wcs">WCS</div>
    </div>
    <div class="navbar">
      <svg viewBox="0 0 32 210"><g fill="none" stroke="#6d7680"><rect x="7" y="18" width="18" height="20" rx="3"/><path d="M7 28h18M16 38v8"/><path d="M10 64v14M14 62v16M18 62v16M22 64v14"/><path d="M8 90l16 14M24 90L8 104M16 108v20M6 120h20"/><path d="M4 168h24M4 174h24M10 180h14v22H10zM4 168v30"/></g></svg>
    </div>
    <svg class="ucs" viewBox="0 0 80 70"><path d="M22 10V60M22 60H70" stroke="#d8dcde" fill="none"/><rect x="18" y="56" width="8" height="8" fill="none" stroke="#d8dcde"/><text class="ucs-t" x="76" y="56">X</text><text class="ucs-t" x="22" y="4">Y</text></svg>
  </div>

  <aside class="vscroll">
    <span class="sc-ar">︿</span>
    <div class="sc-thumb"></div>
    <span class="sc-ar sc-down">﹀</span>
  </aside>

  <div class="cmdbar">
    <div class="cmd-l"><i class="grip"></i><span class="cmd-x">×</span><svg class="wrench" viewBox="0 0 16 20"><path d="M3 2l3 3v2l5 8 2 3-2 1-2-3-5-7-3-2V3z" fill="#ddd" stroke="#555" stroke-width=".6"/></svg></div>
    <div class="cmd-r">
      <span class="cmd-prompt">&gt;_</span><i class="dd dd-dark"></i><span class="cmd-in">键入命令</span>
      <i class="tri-up"></i>
    </div>
  </div>
</main>

<div class="layoutbar">
  <div class="lnav"><span>|◂</span><span>◂</span><span>▸</span><span>▸|</span></div>
  <span class="ltab black">模型</span>
  <span class="ltab">布局1</span>
  <span class="ltab">布局2</span>
  <div class="hscroll"><span class="hs-l">‹</span><div class="hs-thumb"></div><span class="hs-r">›</span></div>
</div>

<footer class="status">
  <span class="coords">3749.4644, 1681.7183, 0.0000</span>
  <div class="sbtns">
    <b class="sb"><svg class="ss"><use href="#s-a"/></svg></b>
    <b class="sb"><svg class="ss"><use href="#s-b"/></svg></b>
    <b class="sb"><svg class="ss"><use href="#s-c"/></svg></b>
    <b class="sb on"><svg class="ss"><use href="#s-d"/></svg></b>
    <b class="sb"><svg class="ss"><use href="#s-e"/></svg></b>
    <b class="sb on"><svg class="ss"><use href="#s-f"/></svg></b>
    <b class="sb"><svg class="ss"><use href="#s-g"/></svg></b>
    <b class="sb on"><svg class="ss"><use href="#s-h"/></svg></b>
    <b class="sb on"><svg class="ss"><use href="#s-i"/></svg></b>
    <b class="sb on"><svg class="ss"><use href="#s-j"/></svg></b>
    <b class="sb"><svg class="ss"><use href="#s-k"/></svg></b>
    <b class="sb on"><svg class="ss"><use href="#s-l"/></svg></b>
    <b class="sb"><svg class="ss"><use href="#s-m"/></svg></b>
    <b class="sb"><svg class="ss"><use href="#s-n"/></svg></b>
    <b class="sb"><svg class="ss"><use href="#s-o"/></svg></b>
  </div>
  <div class="sright">
    <span class="modelbtn">模型</span>
    <b class="sb"><svg class="ss" viewBox="0 0 20 20"><rect x="2" y="2" width="16" height="13" fill="#fff" stroke="#333"/><path d="M6 4v9h8z" fill="#333"/><path d="M2 18h16" stroke="#333" stroke-width="2"/></svg></b>
    <b class="sb"><svg class="ss" viewBox="0 0 20 20"><rect x="1" y="3" width="8" height="10" fill="#fff" stroke="#333"/><rect x="11" y="3" width="8" height="10" fill="#fff" stroke="#333"/><path d="M1 17h18" stroke="#333" stroke-width="2"/></svg></b>
    <b class="sb anno"><svg class="ss"><use href="#s-anno"/></svg><span>1:1</span><i class="dd dd-black"></i></b>
    <b class="sb"><svg class="ss"><use href="#s-annob"/></svg></b>
    <b class="sb"><svg class="ss"><use href="#s-annoc"/></svg></b>
    <b class="sb gapl"><svg class="ss"><use href="#s-gear"/></svg></b>
    <b class="sb"><svg class="ss"><use href="#s-lock"/></svg></b>
    <b class="sb"><svg class="ss"><use href="#s-hw"/></svg></b>
    <b class="sb"><svg class="ss"><use href="#s-tool"/></svg></b>
    <b class="sb"><svg class="ss"><use href="#l-bulb"/></svg></b>
    <i class="dd dd-black dd-more"></i>
    <b class="sb"><svg class="ss"><use href="#s-win"/></svg></b>
  </div>
</footer>
</body>
</html>
```
FILE: styles.css
```css
* { box-sizing: border-box; }
html, body { margin: 0; padding: 0; }
body {
  width: 1916px; height: 1038px; overflow: hidden; display: flex; flex-direction: column;
  font: 12px/1.2 "Liberation Sans", "Noto Sans CJK SC", sans-serif; color: #333; background: #f0f0f0;
}
.defs { position: absolute; width: 0; height: 0; }

/* drop-down triangles */
.dd { display: inline-block; width: 0; height: 0; border: 3px solid transparent; border-top: 4px solid #555; border-bottom: 0; flex: none; }
.dd-dark { border-top-color: #555; }
.dd-grey { border-top-color: #8c8c8c; }
.dd-white { border-top-color: #ddd; }
.dd-black { border-top-color: #111; }

/* title bar */
.titlebar { height: 24px; display: flex; background: #fff; position: relative; flex: none; }
.appbtn {
  position: absolute; left: 0; top: 0; width: 41px; height: 40px; z-index: 3;
  background: linear-gradient(#6d6d6d, #b4b4b4 50%, #8d8d8d); border-right: 1px solid #222; border-bottom: 1px solid #222;
}
.applogo { position: absolute; left: 4px; top: 5px; width: 26px; height: 28px; }
.appbtn .dd { position: absolute; left: 32px; top: 19px; }
.qat {
  width: 434px; padding-left: 50px; display: flex; align-items: center; flex: none;
  background: linear-gradient(#a6a6a6, #6a6a6a 60%, #4f4f4f);
}
.qi { width: 16px; height: 16px; flex: none; margin-right: 8px; }
.qat .dd { margin: 0 6px 0 -1px; }
.workspace {
  width: 177px; height: 20px; margin-left: 1px; display: flex; align-items: center; padding-left: 5px; position: relative;
  background: linear-gradient(#e4e4e4, #c4c4c4); color: #222;
}
.ws-gear { margin-right: 2px; }
.workspace .ws-dd { position: absolute; right: 3px; top: 9px; margin: 0; }
.qat .qat-more { margin: 0 0 0 4px; border-top-color: #222; }
.wintitle { flex: 1; padding-left: 333px; display: flex; align-items: center; font-size: 13px; color: #222; white-space: nowrap; }
.docname { margin-left: 17px; }
.searchbar {
  width: 448px; flex: none; display: flex; align-items: center; padding-left: 7px; color: #eee;
  background: linear-gradient(#9a9a9a, #5a5a5a 70%, #444);
}
.tri-r { width: 0; height: 0; border: 4px solid transparent; border-left: 5px solid #111; border-right: 0; margin-right: 3px; }
.searchbox { width: 180px; height: 20px; margin-right: 4px; background: #f4f4f4; color: #888; font-style: italic; line-height: 20px; padding-left: 3px; }
.bino { margin: 0 10px 0 0; }
.user { margin: 0 4px 0 0; }
.login { color: #e6e6e6; width: 85px; }
.login-dd { margin-right: 10px; }
.xicon { margin-right: 6px; }
.a360 { margin-right: 3px; }
.help {
  width: 16px; height: 16px; border-radius: 50%; margin: 0 3px 0 22px; background: #f4f8fc; color: #1f5fae; font-weight: 700;
  text-align: center; line-height: 14px; border: 1px solid #2f6fae; font-size: 12px;
}
.winctl { width: 156px; flex: none; display: flex; align-items: center; gap: 30px; padding-left: 41px; }
.wc { width: 14px; height: 14px; flex: none; }

/* ribbon tabs */
.ribbontabs { height: 20px; background: #3f3f3f; display: flex; align-items: flex-end; padding-left: 47px; flex: none; }
.rt { height: 20px; line-height: 20px; padding: 0 10px; color: #eaeaea; white-space: nowrap; }
.rt-wide { letter-spacing: .5px; }
.rt.active { width: 41px; height: 17px; line-height: 17px; padding: 0 2px 0 0; text-align: center; background: #f4f4f4; color: #333; }
.rt-extra { height: 20px; display: flex; align-items: center; gap: 6px; margin-left: 29px; }
.rt-pill { width: 13px; height: 7px; background: #e8e8e8; border-radius: 3px; }

/* ribbon */
.ribbon { height: 99px; display: flex; flex: none; border-top: 1px solid #e8e8e8; border-bottom: 2px solid #f4f4f4; background: linear-gradient(#d2d2d2, #8f8f8f); }
.panel { flex: none; display: flex; flex-direction: column; border-right: 1px solid #cfcfcf; }
.w-draw { width: 212px; } .w-mod { width: 227px; } .w-layer { width: 215px; } .w-note { width: 117px; }
.w-block { width: 134px; } .w-prop { width: 205px; } .w-group { width: 68px; } .w-util { width: 99px; } .w-clip { width: 76px; }
.pbody { height: 80px; padding-top: 6px; display: flex; flex: none; background: #fff; }
.pad3 { padding-left: 3px; } .pad4 { padding-left: 4px; } .pad8 { padding-left: 8px; }
.ptitle {
  flex: 1; display: flex; align-items: center; justify-content: center; gap: 5px; position: relative;
  background: linear-gradient(#ececec, #dfdfdf); color: #444; font-size: 13px;
}
.launch { position: absolute; right: 6px; top: 6px; width: 8px; height: 8px; }
.lg { display: flex; flex-direction: column; align-items: center; flex: none; color: #444; }
.lg span { line-height: 16px; margin-top: 2px; white-space: nowrap; }
.ilg { width: 36px; height: 36px; }
.lg .dd { margin-top: 4px; }
.w38 { width: 38px; } .w40 { width: 40px; } .w41 { width: 41px; } .w42 { width: 42px; } .w46 { width: 46px; }
.w50 { width: 50px; } .w73 { width: 73px; } .w58 { width: 58px; } .w59 { width: 59px; } .w71 { width: 71px; }
.col { display: flex; flex-direction: column; gap: 2px; flex: none; }
.ml1 { margin-left: 1px; } .ml3 { margin-left: 3px; } .ml4 { margin-left: 4px; }
.ib { width: 24px; height: 22px; display: flex; align-items: center; justify-content: center; background: #f6f6f6; border: 1px solid #e0e0e0; }
.ib.on { background: #bcdcf6; border-color: #4b92d0; }
.ib-dd { width: 36px; justify-content: flex-start; gap: 3px; padding-left: 2px; }
.ic { width: 20px; height: 20px; flex: none; }
.ic16 { width: 16px; height: 16px; flex: none; margin-right: 2px; }
.st { height: 22px; display: flex; align-items: center; white-space: nowrap; color: #444; }
.st .ic { width: 18px; height: 18px; margin-right: 2px; }
.wide-ic .st .ic { margin-right: 6px; }
.block-ic .st .ic { margin-right: 5px; }
.gap12 { margin-left: 12px; } .gap8 { margin-left: 8px; }
.iconrow { display: flex; gap: 2px; }
.combo { height: 22px; display: flex; align-items: center; padding: 0 5px 0 3px; background: #f6f6f6; border: 1px solid #e4e4e4; color: #444; }
.push { margin-left: auto; }
.w209 { width: 209px; } .w178 { width: 178px; }
.swatch { width: 14px; height: 14px; background: #fff; border: 1px solid #222; margin-right: 3px; flex: none; }
.layerc .swatch { margin-left: 2px; margin-right: 6px; }
.prow { display: flex; align-items: center; gap: 3px; height: 22px; }
.prow .ic { width: 16px; height: 16px; margin-left: 1px; }
.lw { height: 1px; background: #222; flex: none; margin-right: 3px; }
.lw63 { width: 63px; } .lw58 { width: 58px; margin-left: 5px; }
.lg .bigA { font-size: 40px; line-height: 36px; height: 36px; margin-top: 0; color: #333; }

/* file tabs */
.doctabs {
  height: 33px; flex: none; display: flex; align-items: flex-start; padding: 5px 0 0 20px; gap: 9px;
  background: linear-gradient(#b9b9b9, #8c8c8c 85%, #6c6c6c 85%, #7a7a7a 97%, #111 97%);
}
.doctab {
  width: 123px; height: 23px; padding: 0 14px 0 12px; display: flex; align-items: center; justify-content: space-between;
  background: linear-gradient(#dadada, #aeaeae); clip-path: polygon(8px 0, 115px 0, 123px 100%, 0 100%); color: #333;
}
.doc-x { color: #8a8a8a; font-size: 15px; }
.newtab { width: 22px; height: 16px; margin-top: 2px; background: #696b6b; border-radius: 3px; border: 1px solid #808080; }

/* viewports */
.main { height: 824px; flex: none; display: flex; position: relative; padding: 1px 0 1px 3px; background: #f4f4f4; }
.vp { width: 947px; position: relative; background: #1f2a31; overflow: hidden; flex: none; }
.vp-gap { width: 3px; background: #fff; flex: none; }
.vplabel { position: absolute; left: 4px; top: 7px; color: #dfe3e6; font-size: 13px; white-space: nowrap; }
.sheet { position: absolute; left: 110px; top: 0; width: 723px; height: 806px; background: #fff; }
.draw { display: block; width: 723px; height: 805px; }
.wm { opacity: .1; }
.wm-t, .wm-a { font: 700 165px "Liberation Sans", sans-serif; fill: #6f9ac4; }
.wm-s { font: 400 50px "Liberation Sans", sans-serif; fill: #8a8a8a; }
.dash { fill: none; stroke: #b5625a; stroke-width: 1.300; stroke-dasharray: 14 5 3 5; }
.w1-s { fill: none; stroke: #2d7c4e; stroke-width: 2.600; }
.s-g { fill: none; stroke: #2d7c4e; stroke-width: 2.300; }
.s-k { fill: none; stroke: #1a1a1a; stroke-width: 2; }
.w1-p { fill: none; stroke: #a697dc; stroke-width: 2.400; }
.w-a { fill: none; stroke: #f0a23a; stroke-width: 2; }
.cl-v { stroke: #e2604a; stroke-width: 1.300; fill: none; }
.cl-h { stroke: #e9784c; stroke-width: 2.200; fill: none; }
.cl-d { stroke: #c4685a; stroke-width: 1.300; stroke-dasharray: 10 4 3 4; fill: none; }
.thin-k { stroke: #333; stroke-width: 1.300; fill: none; }
.arc { fill: none; stroke: #5c5c5c; stroke-width: 1.300; }
.mk { fill: #111; }
.mk-b { fill: #3340c8; }
.dim-b { stroke: #4650cc; stroke-width: 1.300; fill: none; }
.dim-a { stroke: #8d87d8; stroke-width: 1.500; fill: none; }
.dim-k { stroke: #222; stroke-width: 1.200; fill: none; }
.t-b { font: italic 400 24px "Liberation Serif", serif; fill: #3b45c0; }
.tn { font-size: 28px; }
.t-k { font: italic 400 20px "Liberation Serif", serif; fill: #1a1a1a; }
.t-m { text-anchor: middle; }
.ta { font-size: 28px; }
.t120 { font-size: 20px; }
.tph { font-size: 20px; }
.t4 { font-size: 13px; font-weight: 700; }
.tr1 { font-size: 19px; }
.par { font: 700 28px "Liberation Mono", monospace; fill: #222; }
.par.cjk { font: 700 27px "Noto Sans CJK SC", sans-serif; }
.ghost { font: 400 16px "Noto Sans CJK SC", sans-serif; fill: #c4c4c4; }

.cube { position: absolute; width: 130px; height: 175px; }
.cube-l { left: 799px; top: 19px; }
.cube-r { left: 798px; top: 43px; }
.ring { position: absolute; left: 5px; top: 5px; width: 120px; height: 120px; border: 15px solid #434d56; border-radius: 50%; }
.face { position: absolute; left: 40px; top: 40px; width: 50px; height: 50px; background: #b4b7ba; color: #7b7f83; font-size: 28px; line-height: 48px; text-align: center; }
.dir { position: absolute; width: 20px; text-align: center; color: #c6c9cb; font-size: 16px; line-height: 20px; }
.dir.n { left: 55px; top: 0; }
.dir.s { left: 55px; top: 113px; }
.dir.e { left: 111px; top: 55px; }
.dir.w { left: -1px; top: 55px; }
.wcs { position: absolute; left: 41px; top: 152px; width: 47px; height: 17px; border-radius: 4px; background: #8b929b; color: #5b626a; font-size: 10px; line-height: 17px; padding-left: 4px; }
.ucs { position: absolute; left: -1px; top: 741px; width: 80px; height: 70px; overflow: visible; }
.ucs-t { font: 400 17px "Liberation Sans", sans-serif; fill: #d8dcde; }
.vpctl { position: absolute; right: 12px; top: 11px; width: 60px; height: 14px; }
.vpctl svg { display: block; width: 60px; height: 14px; }
.navbar { position: absolute; right: 5px; top: 238px; width: 32px; height: 211px; background: #59626b; border-radius: 2px; }
.navbar svg { display: block; width: 32px; height: 210px; }

.vscroll { width: 16px; flex: none; background: #f2f2f2; position: relative; }
.sc-ar { display: block; text-align: center; font-size: 12px; color: #444; height: 16px; line-height: 16px; }
.sc-thumb { position: absolute; left: 2px; top: 104px; width: 14px; height: 17px; background: #cdcdcd; }
.sc-down { position: absolute; left: 0; bottom: 3px; width: 16px; }

.cmdbar { position: absolute; left: 386px; top: 797px; width: 1147px; height: 26px; display: flex; }
.cmd-l { width: 53px; flex: none; display: flex; align-items: center; gap: 6px; padding-left: 4px; background: rgba(84, 84, 84, .9); border-radius: 3px 0 0 3px; color: #eee; }
.grip { width: 4px; height: 22px; border-left: 3px dotted #999; }
.cmd-x { font-size: 17px; font-weight: 700; width: 14px; }
.wrench { width: 14px; height: 18px; }
.cmd-r { flex: 1; display: flex; align-items: center; gap: 5px; padding-left: 5px; position: relative; background: rgba(255, 255, 255, .68); border-top: 1px solid #a0a0a0; border-radius: 0 3px 3px 0; color: #888; }
.cmd-prompt { width: 15px; height: 15px; border: 1px solid #777; font-size: 9px; line-height: 13px; text-align: center; color: #555; }
.cmd-in { margin-left: 10px; }
.tri-up { position: absolute; right: 3px; top: 12px; border: 4px solid transparent; border-bottom: 4px solid #222; border-top: 0; }

/* layout tabs */
.layoutbar { height: 18px; flex: none; display: flex; align-items: center; background: #f1f1f1; color: #333; font-size: 13px; position: relative; }
.lnav { width: 60px; display: flex; gap: 6px; padding-left: 7px; color: #555; font-size: 12px; white-space: nowrap; }
.ltab { width: 48px; text-align: center; position: relative; padding-right: 4px; }
.ltab::after { content: ""; position: absolute; right: 2px; top: 1px; bottom: 1px; width: 1px; background: #666; transform: skewX(-20deg); }
.ltab.black { width: 40px; height: 18px; line-height: 18px; background: #111; color: #fff; clip-path: polygon(0 0, 100% 0, 88% 100%, 12% 100%); padding: 0; }
.ltab.black::after { display: none; }
.hscroll { flex: 1; margin-left: 1062px; height: 18px; display: flex; align-items: center; border-left: 1px solid #cfcfcf; position: relative; padding-left: 7px; font-weight: 700; font-size: 15px; }
.hs-thumb { position: absolute; left: 609px; top: 1px; width: 16px; height: 15px; background: #cdcdcd; }
.hs-r { position: absolute; left: 632px; top: -1px; }

/* status bar */
.status { height: 20px; flex: none; display: flex; align-items: center; border-top: 1px solid #222; background: linear-gradient(#5e5e5e, #a4a4a4); position: relative; }
.coords { width: 218px; padding-left: 12px; font: 11px "Liberation Sans", sans-serif; color: #111; letter-spacing: .7px; white-space: nowrap; }
.sbtns { display: flex; gap: 1px; height: 19px; }
.sb { width: 21px; height: 19px; flex: none; display: flex; align-items: center; justify-content: center; background: #bdbdbd; font-weight: 400; }
.sb.on { background: #a9cfee; }
.ss { width: 16px; height: 16px; }
.sright { margin-left: auto; display: flex; align-items: center; gap: 1px; padding-right: 2px; height: 19px; }
.modelbtn { width: 30px; text-align: center; font-size: 13px; color: #111; background: #bdbdbd; line-height: 19px; margin-right: 1px; }
.anno { width: 52px; margin-left: 18px; gap: 2px; color: #222; }
.gapl { margin-left: 8px; }
.dd-more { margin: 0 4px 0 6px; }
```
